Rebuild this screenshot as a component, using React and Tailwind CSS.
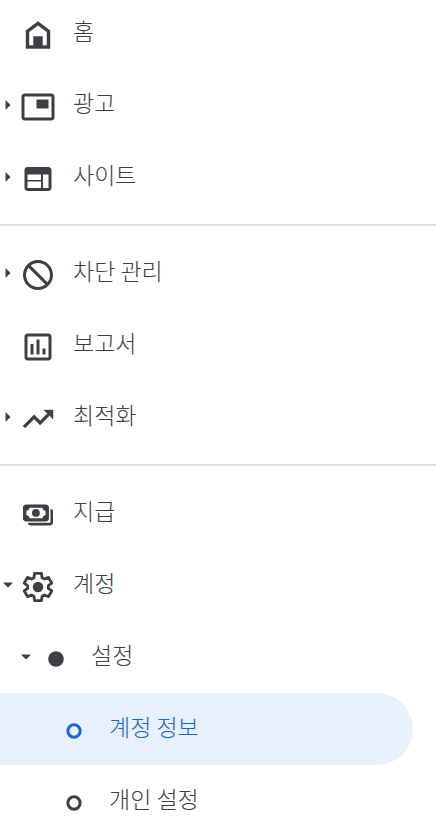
import React from "react";
import clsx from "clsx";

const HomeIcon = () => (
  <path
    fillRule="evenodd"
    d="M12 3 4 9v12h16V9l-8-6zM6 19v-9l6-4.5 6 4.5v9h-3v-6H9v6H6z"
    stroke="currentColor"
    strokeWidth="0.3"
  />
);

const AdsIcon = () => (
  <path d="M19 7h-8v6h8V7zm2-4H3c-1.1 0-2 .9-2 2v14c0 1.1.9 2 2 2h18c1.1 0 2-.9 2-2V5c0-1.1-.9-2-2-2zm0 16H3V5h18v14z" />
);

const SitesIcon = () => (
  <path
    fillRule="evenodd"
    d="M19 4H5c-1.1 0-2 .9-2 2v12c0 1.1.9 2 2 2h14c1.1 0 2-.9 2-2V6c0-1.1-.9-2-2-2zM5 9h9v3.7H5V9zm0 4.7h9V18H5v-4.3zM15.3 9H19v9h-3.7V9z"
  />
);

const BlockIcon = () => (
  <path d="M12 2c5.52 0 10 4.48 10 10s-4.48 10-10 10S2 17.52 2 12 6.48 2 12 2zm8 10c0-4.42-3.58-8-8-8-1.85 0-3.55.63-4.9 1.69L18.31 16.9C19.37 15.55 20 13.85 20 12zm-8 8c1.85 0 3.55-.63 4.9-1.69L5.69 7.1C4.63 8.45 4 10.15 4 12c0 4.42 3.58 8 8 8z" />
);

const ReportIcon = () => (
  <path d="M19 3H5c-1.1 0-2 .9-2 2v14c0 1.1.9 2 2 2h14c1.1 0 2-.9 2-2V5c0-1.1-.9-2-2-2zm0 16H5V5h14v14zM7 10h2v7H7zm4-3h2v10h-2zm4 6h2v4h-2z" />
);

const TrendIcon = () => (
  <path
    d="m16 6 2.29 2.29-4.88 4.88-4-4L2 16.59 3.41 18l6-6 4 4 6.3-6.29L22 12V6z"
    stroke="currentColor"
    strokeWidth="0.3"
  />
);

const PaymentsIcon = () => (
  <>
    <path
      fillRule="evenodd"
      d="M4 5h13.3c1.1 0 2 .9 2 2v7.3c0 1.1-.9 2-2 2H4c-1.1 0-2-.9-2-2V7c0-1.1.9-2 2-2zm2.3 2.2c0 1.1-.9 2-2 2v2.9c1.1 0 2 .9 2 2H15c0-1.1.9-2 2-2V9.2c-1.1 0-2-.9-2-2H6.3z"
    />
    <circle cx="10.6" cy="10.6" r="2.6" />
    <path d="M20.3 8c1 0 1.7.6 1.7 1.5V17c0 1.1-.9 2-2 2H7c-1 0-1.700-.7-1.700-1.800h15V8z" />
  </>
);

const SettingsIcon = () => (
  <>
    <path
      d="M9.700 2.900h4.600l.4 2.900 1.600.9 2.700-1.100 2.200 3.800-2.300 1.700v1.800l2.300 1.700-2.200 3.800-2.700-1.100-1.600.9-.4 2.900H9.700l-.4-2.900-1.600-.9L5 18.400l-2.200-3.800 2.300-1.700v-1.800L2.800 9.400 5 5.600l2.700 1.100 1.600-.9z"
      fill="none"
      stroke="currentColor"
      strokeWidth="1.9"
      strokeLinejoin="round"
    />
    <circle cx="12" cy="12" r="3.5" />
  </>
);

const DotIcon = () => <circle cx="12" cy="12" r="5.2" />;

const RingIcon = () => (
  <circle cx="12" cy="12" r="4.1" fill="none" stroke="currentColor" strokeWidth="2" />
);

const groups = [
  [
    { label: "홈", icon: HomeIcon },
    { label: "광고", icon: AdsIcon, arrow: "right" },
    { label: "사이트", icon: SitesIcon, arrow: "right" },
  ],
  [
    { label: "차단 관리", icon: BlockIcon, arrow: "right" },
    { label: "보고서", icon: ReportIcon },
    { label: "최적화", icon: TrendIcon, arrow: "right" },
  ],
  [
    { label: "지급", icon: PaymentsIcon },
    { label: "계정", icon: SettingsIcon, arrow: "down" },
    { label: "설정", icon: DotIcon, arrow: "down", level: 1 },
    { label: "계정 정보", icon: RingIcon, level: 2, active: true },
    { label: "개인 설정", icon: RingIcon, level: 2 },
  ],
];

const indents = ["pl-0", "pl-[18px]", "pl-[36px]"];

const Arrow = ({ direction }) => (
  <svg viewBox="0 0 16 16" className="size-4 shrink-0 fill-current" aria-hidden="true">
    {direction === "right" && <path d="M5.5 3v10l5-5z" />}
    {direction === "down" && <path d="M3 5.5h10l-5 5z" />}
  </svg>
);

const NavItem = ({ label, icon: Icon, arrow, level = 0, active }) => {
  const Tag = arrow ? "button" : "a";
  const props = arrow
    ? { type: "button", "aria-expanded": arrow === "down" }
    : { href: "#", "aria-current": active ? "page" : undefined };

  return (
    <li className="pr-[23px]">
      <Tag
        {...props}
        className={clsx(
          "flex h-[72px] w-full items-center rounded-r-full text-left",
          indents[level],
          active ? "bg-[#e8f0fe] text-[#1967d2]" : "text-[#3c4043]"
        )}
      >
        <Arrow direction={arrow} />
        <svg
          viewBox="0 0 24 24"
          className="mt-1 ml-1 size-9 shrink-0 fill-current"
          aria-hidden="true"
        >
          <Icon />
        </svg>
        <span className="ml-[17px] pb-1.5 text-[23px] leading-8 font-light whitespace-nowrap">
          {label}
        </span>
      </Tag>
    </li>
  );
};

const App = () => {
  return (
    <nav className="h-screen overflow-hidden bg-white font-['Noto_Sans_CJK_KR',sans-serif]">
      <div className="-mt-[3px]">
        {groups.map((items, index) => (
          <ul
            key={index}
            className={clsx(index > 0 && "mt-[11px] border-t-2 border-[#dadce0] pt-[11px]")}
          >
            {items.map((item) => (
              <NavItem key={item.label} {...item} />
            ))}
          </ul>
        ))}
      </div>
    </nav>
  );
};

export default App;
